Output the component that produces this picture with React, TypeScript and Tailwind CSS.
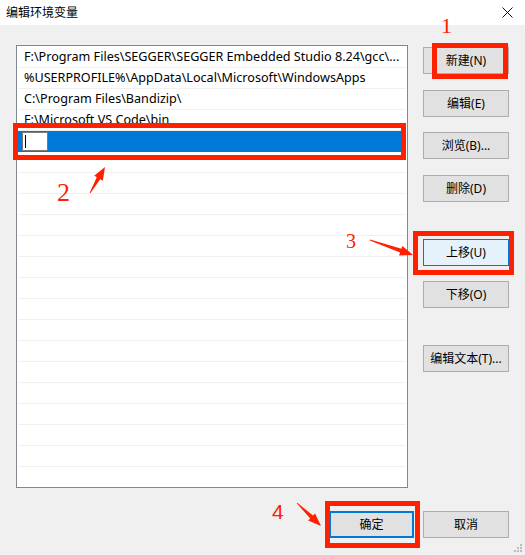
import React from "react";

const paths = [
  "F:\\Program Files\\SEGGER\\SEGGER Embedded Studio 8.24\\gcc\\...",
  "%USERPROFILE%\\AppData\\Local\\Microsoft\\WindowsApps",
  "C:\\Program Files\\Bandizip\\",
  "F:\\Microsoft VS Code\\bin",
];

const font = { fontFamily: '"Segoe UI", "Noto Sans", "Noto Sans CJK SC", sans-serif' };

function arrow(x1: number, y1: number, x2: number, y2: number) {
  const dx = x2 - x1;
  const dy = y2 - y1;
  const len = Math.hypot(dx, dy);
  const ux = dx / len;
  const uy = dy / len;
  const px = -uy;
  const py = ux;
  const head = 13;
  const bx = x2 - ux * head;
  const by = y2 - uy * head;
  const pts = [
    [x1 + px * 0.4, y1 + py * 0.4],
    [bx + px * 2, by + py * 2],
    [bx + px * 5, by + py * 5],
    [x2, y2],
    [bx - px * 5, by - py * 5],
    [bx - px * 2, by - py * 2],
    [x1 - px * 0.4, y1 - py * 0.4],
  ];
  return pts.map((p) => p.join(",")).join(" ");
}

function Btn({ label, className = "" }: { label: string; className?: string }) {
  return (
    <div
      className={
        "flex h-[27px] w-[86px] items-center justify-center border border-[#adadad] bg-[#e1e1e1] text-[12px] text-black " +
        className
      }
    >
      {label}
    </div>
  );
}

export default function App() {
  const rows = Array.from({ length: 21 });
  return (
    <div className="relative h-[555px] w-[525px] overflow-hidden bg-[#f0f0f0]" style={font}>
      <div className="flex h-[25px] items-center justify-between bg-white pl-[6px] pr-[12px]">
        <span className="text-[12px] text-black">编辑环境变量</span>
        <svg width="11" height="11" viewBox="0 0 11 11">
          <path d="M0.5 0.5L10.5 10.5M10.5 0.5L0.5 10.5" stroke="#111" strokeWidth="1" />
        </svg>
      </div>

      <div className="flex pl-[16px] pt-[20px]">
        <div className="h-[443px] w-[392px] overflow-hidden border border-[#828790] bg-white pt-[1px]">
          {rows.map((_, i) => {
            const text = paths[i];
            if (i === 4) {
              return (
                <div key={i} className="ml-[1px] mr-[6px] flex h-[21px] items-center bg-[#0078d7] pl-[4px]">
                  <div className="flex h-[19px] w-[26px] items-center border border-[#7a7a7a] bg-white pl-[2px]">
                    <div className="h-[13px] w-px bg-black" />
                  </div>
                </div>
              );
            }
            return (
              <div
                key={i}
                className="mx-[1px] flex h-[21px] items-center border-b border-[#f0f0f0] pl-[6px] text-[12.6px] text-black"
              >
                {text}
              </div>
            );
          })}
        </div>

        <div className="ml-[15px] mt-[2px] flex flex-col">
          <Btn label="新建(N)" />
          <Btn label="编辑(E)" className="mt-[16px]" />
          <Btn label="浏览(B)..." className="mt-[15px]" />
          <Btn label="删除(D)" className="mt-[16px]" />
          <Btn label="上移(U)" className="mt-[37px] !border-[#0078d7] !bg-[#e5f1fb]" />
          <Btn label="下移(O)" className="mt-[15px]" />
          <Btn label="编辑文本(T)..." className="mt-[37px]" />
        </div>
      </div>

      <div className="mt-[23px] flex justify-end gap-[9px] pr-[16px]">
        <Btn label="确定" className="!w-[85px] !border-2 !border-[#0078d7]" />
        <Btn label="取消" />
      </div>

      {/* resize grip */}
      <svg className="absolute bottom-[2px] right-[2px]" width="10" height="10" viewBox="0 0 10 10">
        {[[8, 2], [8, 5], [5, 5], [8, 8], [5, 8], [2, 8]].map(([x, y], k) => (
          <rect key={k} x={x - 1} y={y - 1} width="2" height="2" fill="#bcbcbc" />
        ))}
      </svg>

      {/* annotations */}
      <div className="pointer-events-none absolute left-[432px] top-[43px] h-[36px] w-[76px] border-[5px] border-[#ff2000]" />
      <div className="pointer-events-none absolute left-[13px] top-[123px] h-[37px] w-[393px] border-[5px] border-[#ff2000]" />
      <div className="pointer-events-none absolute left-[413px] top-[231px] h-[44px] w-[101px] border-[5px] border-[#ff2000]" />
      <div className="pointer-events-none absolute left-[325px] top-[501px] h-[47px] w-[95px] border-[5px] border-[#ff2000]" />

      <span className="absolute left-[441px] top-[15px] text-[22px] leading-none text-[#ff2000]" style={{ fontFamily: '"Liberation Serif", serif' }}>1</span>
      <span className="absolute left-[57px] top-[180px] text-[26px] leading-none text-[#ff2000]" style={{ fontFamily: '"Liberation Serif", serif' }}>2</span>
      <span className="absolute left-[346px] top-[231px] text-[20px] leading-none text-[#ff2000]" style={{ fontFamily: '"Liberation Serif", serif' }}>3</span>
      <span className="absolute left-[272px] top-[501px] text-[21px] leading-none text-[#ff2000]" style={{ fontFamily: '"Liberation Sans", sans-serif' }}>4</span>

      <svg className="pointer-events-none absolute left-0 top-0" width="525" height="555">
        <polygon points={arrow(90, 193, 105, 167)} fill="#ff2000" />
        <polygon points={arrow(370, 240, 413, 255)} fill="#ff2000" />
        <polygon points={arrow(297, 503, 321, 526)} fill="#ff2000" />
      </svg>
    </div>
  );
}
